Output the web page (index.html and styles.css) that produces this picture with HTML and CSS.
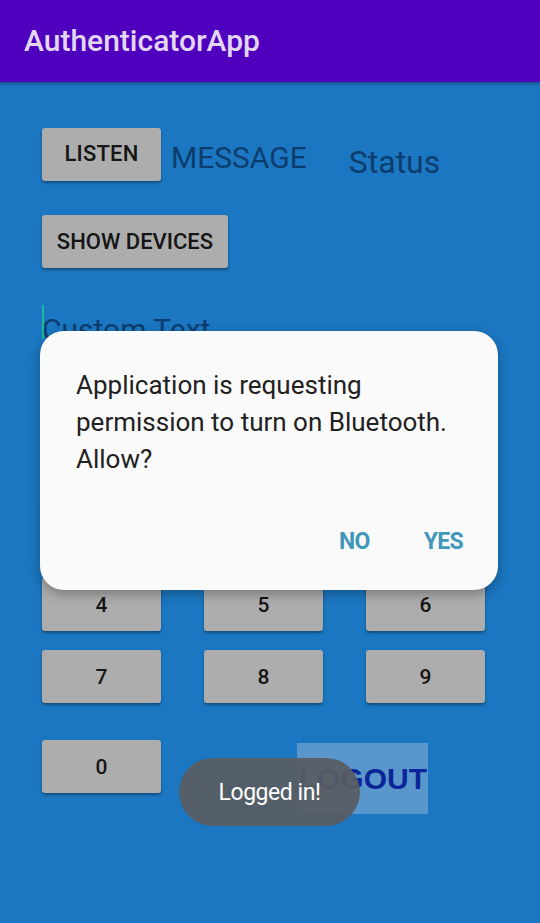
FILE: index.html
```html
<!DOCTYPE html>
<html>
<head>
<meta charset="utf-8">
<link rel="stylesheet" href="styles.css">
</head>
<body>
<div class="screen">
  <header class="appbar">AuthenticatorApp</header>
  <main class="content">
    <div class="row-top">
      <div class="btn btn-listen">LISTEN</div>
      <span class="msg">MESSAGE</span>
      <span class="status">Status</span>
    </div>
    <div class="btn btn-devices">SHOW DEVICES</div>
    <div class="field"><span class="cursor"></span>Custom Text</div>
    <div class="keypad">
      <div class="btn key">1</div><div class="btn key">2</div><div class="btn key">3</div>
      <div class="btn key">4</div><div class="btn key">5</div><div class="btn key">6</div>
      <div class="btn key">7</div><div class="btn key">8</div><div class="btn key">9</div>
    </div>
    <div class="keypad-last">
      <div class="btn key">0</div>
      <div class="logout">LOGOUT</div>
    </div>
  </main>

  <div class="dialog">
    <p class="dialog-text">Application is requesting permission to turn on Bluetooth. Allow?</p>
    <div class="dialog-actions">
      <span class="action">NO</span>
      <span class="action">YES</span>
    </div>
  </div>

  <div class="toast">Logged in!</div>
</div>
</body>
</html>
```

FILE: styles.css
```css
* { box-sizing: border-box; }
html, body { margin: 0; padding: 0; }
body {
  font-family: Roboto, "Noto Sans", sans-serif;
  background: #1b77c1;
}
.screen {
  position: relative;
  width: 540px;
  height: 923px;
  overflow: hidden;
  background: #1b77c1;
}
.appbar {
  height: 82px;
  background: #4f00be;
  color: #e3d6f1;
  font-size: 30px;
  font-weight: 500;
  padding-left: 24px;
  display: flex;
  align-items: center;
  padding-bottom: 2px;
  box-shadow: 0 2px 3px rgba(0,0,0,0.3);
  position: relative;
}
.content {
  padding-left: 42px;
  padding-top: 46px;
}
.btn {
  background: #adadad;
  color: #151515;
  border-radius: 3px;
  box-shadow: 0 2px 3px rgba(0,0,0,0.35);
  display: flex;
  align-items: center;
  justify-content: center;
  font-weight: 500;
}
.row-top {
  display: flex;
  align-items: center;
  height: 53px;
}
.btn-listen {
  width: 119px;
  height: 53px;
  font-size: 22px;
  letter-spacing: 0.01em;
  padding-bottom: 2px;
}
.msg {
  margin-left: 10px;
  font-size: 30px;
  color: #0c3d6d;
  padding-top: 6px;
}
.status {
  margin-left: 42px;
  font-size: 32px;
  color: #0c3d6d;
  padding-top: 14px;
}
.btn-devices {
  margin-top: 34px;
  width: 186px;
  height: 53px;
  font-size: 22px;
  letter-spacing: 0;
}
.field {
  margin-top: 42px;
  position: relative;
  font-size: 30px;
  color: #0c3d6d;
  height: 40px;
  line-height: 40px;
}
.cursor {
  position: absolute;
  left: 0;
  top: -5px;
  width: 2px;
  height: 34px;
  background: #1ab8a0;
}
.keypad {
  margin-top: 156px;
  display: grid;
  grid-template-columns: 119px 119px 119px;
  column-gap: 43px;
  row-gap: 19px;
}
.key {
  height: 53px;
  font-size: 21px;
}
.keypad-last {
  margin-top: 37px;
  display: flex;
  align-items: flex-start;
}
.keypad-last .key { width: 119px; }
.logout {
  margin-left: 136px;
  margin-top: 3px;
  width: 131px;
  height: 71px;
  background: #5896cb;
  color: #0b249a;
  font-size: 30px;
  font-weight: 700;
  font-family: "Liberation Sans", Arial, sans-serif;
  display: flex;
  align-items: center;
  justify-content: flex-end;
  padding-right: 1px;
}
.dialog {
  position: absolute;
  left: 40px;
  top: 331px;
  width: 458px;
  height: 259px;
  background: #fafafa;
  border-radius: 24px;
  box-shadow: 0 4px 12px rgba(0,0,0,0.3);
  padding: 36px 35px 0 36px;
}
.dialog-text {
  margin: 0;
  font-size: 26px;
  line-height: 37px;
  color: #212121;
}
.dialog-actions {
  display: flex;
  justify-content: flex-end;
  gap: 54px;
  margin-top: 50px;
}
.action {
  font-size: 23px;
  font-weight: 700;
  color: #3f98b9;
  letter-spacing: -0.03em;
}
.toast {
  position: absolute;
  left: 179px;
  top: 758px;
  width: 181px;
  height: 68px;
  border-radius: 34px;
  background: rgba(88, 92, 98, 0.93);
  color: #ffffff;
  font-size: 23px;
  display: flex;
  align-items: center;
  justify-content: center;
  letter-spacing: -0.02em;
}
```
